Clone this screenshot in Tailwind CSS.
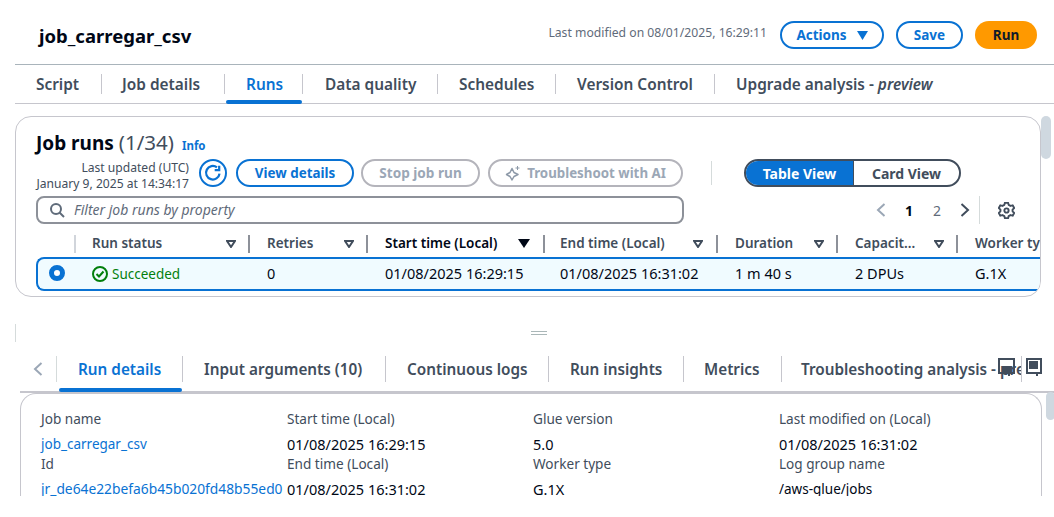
<!DOCTYPE html>
<html lang="en">
<head>
    <meta charset="UTF-8">
    <title>job_carregar_csv</title>
    <script src="https://cdn.jsdelivr.net/npm/@tailwindcss/browser@4"></script>
</head>
<body class="bg-white">
<div class="relative w-[1054px] h-[517px] overflow-hidden bg-white text-[14px] text-[#000716] font-['Noto_Sans',sans-serif]">

    <!-- job header -->
    <div class="ml-[15px] h-[65px] flex items-center border-b border-[#a9b4bb] pl-[24px] pr-[17px]">
        <h1 class="text-[18.500px] font-bold leading-[24px] mt-[7px]">job_carregar_csv</h1>
        <span class="ml-auto text-[12.200px] text-[#5f6b7a] mt-[2px]">Last modified on 08/01/2025, 16:29:11</span>
        <button class="ml-[13px] w-[104px] h-[28px] mt-[6px] flex items-center justify-center gap-[10px] rounded-full border-2 border-[#0972d3] text-[#0972d3] text-[13.500px] font-bold">Actions
            <svg class="w-[11px] h-[9px]" viewBox="0 0 11 9"><path d="M0 0h11L5.500 9z" fill="#0972d3"/></svg>
        </button>
        <button class="ml-[12px] w-[67px] h-[28px] mt-[6px] rounded-full border-2 border-[#0972d3] text-[#0972d3] text-[13.500px] font-bold">Save</button>
        <button class="ml-[12px] w-[62px] h-[28px] mt-[6px] rounded-full bg-[#ff9900] text-[#0f1b2a] text-[13.500px] font-bold">Run</button>
    </div>

    <!-- job tabs -->
    <div class="ml-[15px] h-[39px] flex items-center border-b border-[#c6c6cd] text-[15.400px] font-semibold text-[#414d5c] whitespace-nowrap">
        <div class="w-[86px] pl-[21px] pt-px">Script</div>
        <div class="w-px h-[20px] bg-[#c6c6cd]"></div>
        <div class="w-[122px] pl-[20px] pt-px">Job details</div>
        <div class="w-px h-[20px] bg-[#c6c6cd]"></div>
        <div class="relative w-[77px] h-full flex items-center pl-[21px] pt-px text-[#0972d3]">Runs
            <div class="absolute left-[1px] right-0 bottom-[-1px] h-[4px] rounded-full bg-[#0972d3]"></div>
        </div>
        <div class="w-px h-[20px] bg-[#c6c6cd]"></div>
        <div class="w-[134px] pl-[22px] pt-px">Data quality</div>
        <div class="w-px h-[20px] bg-[#c6c6cd]"></div>
        <div class="w-[117px] pl-[21px] pt-px">Schedules</div>
        <div class="w-px h-[20px] bg-[#c6c6cd]"></div>
        <div class="w-[158px] pl-[21px] pt-px">Version Control</div>
        <div class="w-px h-[20px] bg-[#c6c6cd]"></div>
        <div class="pl-[21px] pt-px">Upgrade analysis - <i>preview</i></div>
    </div>

    <!-- job runs panel -->
    <div class="ml-[15px] mt-[12px] w-[1026px] h-[181px] rounded-[16px] border border-[#c6c6cd] pl-[20px] overflow-hidden">
        <div class="mt-[10px] h-[28px] flex items-baseline">
            <span class="text-[19px] font-bold">Job runs</span>
            <span class="ml-[5px] text-[20.500px] text-[#414d5c]">(1/34)</span>
            <span class="ml-[8px] text-[11.500px] font-bold text-[#0972d3]">Info</span>
        </div>
        <div class="mt-[4px] h-[28px] flex items-center">
            <div class="w-[153px] pt-[5px] text-right text-[12.100px] leading-[16px] text-[#414d5c] whitespace-nowrap">
                <div>Last updated (UTC)</div>
                <div>January 9, 2025 at 14:34:17</div>
            </div>
            <button class="ml-[10px] w-[28px] h-[28px] flex items-center justify-center rounded-full border-2 border-[#0972d3]">
                <svg class="w-[18px] h-[18px]" viewBox="0 0 16 16" fill="none" stroke="#0972d3" stroke-width="2">
                    <path d="M13.800 8.500A6 6 0 1 1 11.500 3"/>
                    <path d="M13.500 1.500v4h-4" stroke-linejoin="miter"/>
                </svg>
            </button>
            <button class="ml-[9px] w-[118px] h-[28px] pt-px rounded-full border-2 border-[#0972d3] text-[#0972d3] text-[13.400px] font-bold">View details</button>
            <button class="ml-[7px] w-[119px] h-[28px] pt-px rounded-full border-2 border-[#b4b4bb] text-[#9ba7b6] text-[13.600px] font-bold">Stop job run</button>
            <button class="ml-[8px] w-[195px] h-[28px] flex items-center justify-center gap-[6px] rounded-full border-2 border-[#b4b4bb] text-[#9ba7b6] text-[13.300px] font-bold">
                <svg class="w-[16px] h-[16px]" viewBox="0 0 16 16" fill="none" stroke="#8d99a8" stroke-width="1.500" stroke-linejoin="round">
                    <path d="M7 3.500 9 7.500 13 9.500 9 11.500 7 15 5 11.500 1.500 9.500 5 7.500z"/>
                    <path d="M12.500 1v4M10.500 3h4" stroke-width="1"/>
                </svg>
                <span class="pt-px">Troubleshoot with AI</span>
            </button>
            <div class="ml-[28px] w-px h-[24px] bg-[#d5dbdb]"></div>
            <div class="ml-[32px] w-[217px] h-[28px] flex rounded-full border-2 border-[#414d5c] overflow-hidden font-bold">
                <div class="w-[107px] flex items-center justify-center bg-[#0972d3] text-white">Table View</div>
                <div class="flex-1 flex items-center justify-center border-l border-[#414d5c] text-[#414d5c]">Card View</div>
            </div>
        </div>
        <div class="mt-[9px] h-[28px] flex items-center">
            <div class="w-[648px] h-[28px] flex items-center gap-[9px] rounded-lg border-2 border-[#8d9199] pl-[11px] shrink-0">
                <svg class="w-[16px] h-[16px]" viewBox="0 0 16 16" fill="none" stroke="#5f6b7a" stroke-width="2"><circle cx="7" cy="7" r="5"/><path d="M10.500 10.500 15 15"/></svg>
                <span class="italic text-[#5f6b7a] text-[14px] -mt-[1px]">Filter job runs by property</span>
            </div>
            <svg class="ml-[191px] w-[12px] h-[14px]" viewBox="0 0 12 14" fill="none" stroke="#9ba7b6" stroke-width="2"><path d="M9.500 1 3 7l6.500 6"/></svg>
            <span class="ml-[18px] font-bold">1</span>
            <span class="ml-[20px] text-[#5f6b7a]">2</span>
            <svg class="ml-[18px] w-[12px] h-[14px]" viewBox="0 0 12 14" fill="none" stroke="#414d5c" stroke-width="2"><path d="M2.500 1 9 7l-6.500 6"/></svg>
            <div class="ml-[8px] w-px h-[28px] bg-[#d5dbdb]"></div>
            <svg class="ml-[18px] w-[17px] h-[17px]" viewBox="0 0 16 16" fill="none" stroke="#414d5c" stroke-width="1.800" stroke-linejoin="round">
                <path d="M6.500 1.200h3l.5 2 1.800 1 2-.6 1.400 2.600-1.500 1.500v1.600l1.500 1.500-1.400 2.600-2-.6-1.800 1-.5 2h-3l-.5-2-1.800-1-2 .6L.800 10.800l1.500-1.500V7.700L.800 6.200l1.400-2.600 2 .6 1.800-1z" transform="translate(0 -.5)"/>
                <circle cx="8" cy="8" r="2"/>
            </svg>
        </div>

        <!-- table header -->
        <div class="mt-[7px] h-[25px] flex items-center font-semibold text-[13.500px] text-[#414d5c] whitespace-nowrap">
            <div class="w-[40px] h-[18px] shrink-0 border-r-2 border-[#d1d5db]"></div>
            <div class="w-[174px] h-[18px] shrink-0 pl-[16px] pr-[12px] flex items-center justify-between border-r-2 border-[#8d9199]">Run status
                <svg class="w-[10px] h-[8px]" viewBox="0 0 10 8" fill="none" stroke="#414d5c" stroke-width="2"><path d="M1 1h8L5 7z"/></svg>
            </div>
            <div class="w-[118px] h-[18px] shrink-0 pl-[17px] pr-[12px] flex items-center justify-between border-r-2 border-[#8d9199]">Retries
                <svg class="w-[10px] h-[8px]" viewBox="0 0 10 8" fill="none" stroke="#414d5c" stroke-width="2"><path d="M1 1h8L5 7z"/></svg>
            </div>
            <div class="w-[177px] h-[18px] shrink-0 pl-[17px] pr-[13px] flex items-center justify-between border-r-2 border-[#8d9199] text-[#000716]">Start time (Local)
                <svg class="w-[12px] h-[9px]" viewBox="0 0 12 9"><path d="M0 0h12L6 9z" fill="#000716"/></svg>
            </div>
            <div class="w-[173px] h-[18px] shrink-0 pl-[15px] pr-[13px] flex items-center justify-between border-r-2 border-[#8d9199]">End time (Local)
                <svg class="w-[10px] h-[8px]" viewBox="0 0 10 8" fill="none" stroke="#414d5c" stroke-width="2"><path d="M1 1h8L5 7z"/></svg>
            </div>
            <div class="w-[120px] h-[18px] shrink-0 pl-[17px] pr-[12px] flex items-center justify-between border-r-2 border-[#8d9199]">Duration
                <svg class="w-[10px] h-[8px]" viewBox="0 0 10 8" fill="none" stroke="#414d5c" stroke-width="2"><path d="M1 1h8L5 7z"/></svg>
            </div>
            <div class="w-[120px] h-[18px] shrink-0 pl-[17px] pr-[12px] flex items-center justify-between border-r-2 border-[#8d9199]">Capacit...
                <svg class="w-[10px] h-[8px]" viewBox="0 0 10 8" fill="none" stroke="#414d5c" stroke-width="2"><path d="M1 1h8L5 7z"/></svg>
            </div>
            <div class="pl-[17px]">Worker type</div>
        </div>

        <!-- selected row -->
        <div class="mt-[1px] h-[34px] flex items-center rounded-l-lg border-2 border-r-0 border-[#0972d3] bg-[#f0fbff] whitespace-nowrap">
            <div class="w-[38px] pl-[11px] shrink-0">
                <div class="w-[16px] h-[16px] -mt-[3px] rounded-full border-[5px] border-[#0972d3] bg-white"></div>
            </div>
            <div class="w-[174px] pl-[16px] shrink-0 flex items-center gap-[4px] text-[13.500px] text-[#037f0c]">
                <svg class="w-[16px] h-[16px]" viewBox="0 0 16 16" fill="none" stroke="#037f0c" stroke-width="2"><circle cx="8" cy="8" r="7"/><path d="M4.500 8 7 10.500 11.500 5.500"/></svg>
                Succeeded
            </div>
            <div class="w-[118px] pl-[17px] shrink-0 text-[14.500px]">0</div>
            <div class="w-[177px] pl-[17px] shrink-0 text-[14.500px]">01/08/2025 16:29:15</div>
            <div class="w-[173px] pl-[15px] shrink-0 text-[14.500px]">01/08/2025 16:31:02</div>
            <div class="w-[120px] pl-[17px] shrink-0 text-[14.500px]">1 m 40 s</div>
            <div class="w-[120px] pl-[17px] shrink-0 text-[14.500px]">2 DPUs</div>
            <div class="pl-[17px] text-[14.500px]">G.1X</div>
        </div>
    </div>

    <!-- resize handle -->
    <div class="mt-[27px] h-[18px] flex items-center">
        <div class="ml-[15px] w-px h-[18px] bg-[#d5dbdb]"></div>
        <div class="ml-[515px] w-[16px] h-[4px] border-y border-[#aab7b8]"></div>
    </div>

    <!-- bottom tabs -->
    <div class="relative mt-[5px] ml-[20px] h-[46px] flex items-center border-b-2 border-[#c6c6cd] text-[15.300px] font-semibold text-[#414d5c] whitespace-nowrap">
        <svg class="ml-[12px] w-[12px] h-[14px] shrink-0" viewBox="0 0 12 14" fill="none" stroke="#9ba7b6" stroke-width="2"><path d="M9.500 1 3 7l6.500 6"/></svg>
        <div class="ml-[12px] w-px h-[26px] bg-[#d5dbdb] shrink-0"></div>
        <div class="relative w-[125px] h-full shrink-0 flex items-center pl-[21px] text-[#0972d3]">Run details
            <div class="absolute left-[2px] right-0 bottom-[-1px] h-[4px] rounded-full bg-[#0972d3]"></div>
        </div>
        <div class="w-px h-[26px] bg-[#c6c6cd] shrink-0"></div>
        <div class="w-[202px] pl-[21px] shrink-0">Input arguments (10)</div>
        <div class="w-px h-[26px] bg-[#c6c6cd] shrink-0"></div>
        <div class="w-[162px] pl-[21px] shrink-0">Continuous logs</div>
        <div class="w-px h-[26px] bg-[#c6c6cd] shrink-0"></div>
        <div class="w-[134px] pl-[21px] shrink-0">Run insights</div>
        <div class="w-px h-[26px] bg-[#c6c6cd] shrink-0"></div>
        <div class="w-[97px] pl-[20px] shrink-0">Metrics</div>
        <div class="w-px h-[26px] bg-[#c6c6cd] shrink-0"></div>
        <div class="w-[239px] pl-[19px] shrink-0 overflow-hidden">Troubleshooting analysis - preview</div>
        <div class="w-px h-[26px] bg-[#c6c6cd] shrink-0"></div>

        <!-- icons overlapping the tab strip -->
        <svg class="absolute left-[978px] top-[11px] w-[18px] h-[20px]" viewBox="0 0 18 20" fill="none" stroke="#414d5c" stroke-width="2"><path d="M1 1h15v14H1z"/><path d="M5 9h7v4H5z" fill="#414d5c"/><path d="M11 15v3"/></svg>
        <svg class="absolute left-[1006px] top-[11px] w-[16px] h-[20px]" viewBox="0 0 16 20" fill="none" stroke="#414d5c" stroke-width="2"><path d="M1 1h14v14H1z"/><path d="M4 4h7v6H4z" fill="#414d5c"/><path d="M11 15v3"/></svg>
    </div>

    <!-- run details panel -->
    <div class="ml-[20px] w-[1022px] h-[103px] rounded-t-[16px] border-x border-t border-[#c6c6cd] overflow-hidden pl-[20px] pt-[15px]">
        <div class="grid grid-cols-[246px_246px_246px_246px] text-[#000716] whitespace-nowrap">
            <div class="h-[20px] leading-[20px] text-[13.600px] text-[#414d5c]">Job name</div>
            <div class="h-[20px] leading-[20px] text-[13.600px] text-[#414d5c]">Start time (Local)</div>
            <div class="h-[20px] leading-[20px] text-[13.600px] text-[#414d5c]">Glue version</div>
            <div class="h-[20px] leading-[20px] text-[13.600px] text-[#414d5c]">Last modified on (Local)</div>
            <div class="h-[25px] pt-[5px] leading-[20px] text-[13.500px] text-[#0972d3]">job_carregar_csv</div>
            <div class="h-[25px] pt-[5px] leading-[20px] text-[14.500px]">01/08/2025 16:29:15</div>
            <div class="h-[25px] pt-[5px] leading-[20px] text-[14.500px]">5.0</div>
            <div class="h-[25px] pt-[5px] leading-[20px] text-[14.500px]">01/08/2025 16:31:02</div>
            <div class="h-[20px] leading-[20px] text-[13.600px] text-[#414d5c]">Id</div>
            <div class="h-[20px] leading-[20px] text-[13.600px] text-[#414d5c]">End time (Local)</div>
            <div class="h-[20px] leading-[20px] text-[13.600px] text-[#414d5c]">Worker type</div>
            <div class="h-[20px] leading-[20px] text-[13.600px] text-[#414d5c]">Log group name</div>
            <div class="h-[25px] pt-[5px] leading-[20px] text-[13.800px] text-[#0972d3] overflow-hidden">jr_de64e22befa6b45b020fd48b55ed0</div>
            <div class="h-[25px] pt-[5px] leading-[20px] text-[14.500px]">01/08/2025 16:31:02</div>
            <div class="h-[25px] pt-[5px] leading-[20px] text-[14.500px]">G.1X</div>
            <div class="h-[25px] pt-[5px] leading-[20px] text-[13.500px]">/aws-glue/jobs</div>
        </div>
    </div>

    <!-- scroll thumbs -->
    <div class="absolute left-[1041px] top-[116px] w-[10px] h-[43px] rounded-full bg-[#cfd8e0]"></div>
    <div class="absolute left-[1046px] top-[392px] w-[9px] h-[28px] rounded-full bg-[#cfd8e0]"></div>
</div>
</body>
</html>
